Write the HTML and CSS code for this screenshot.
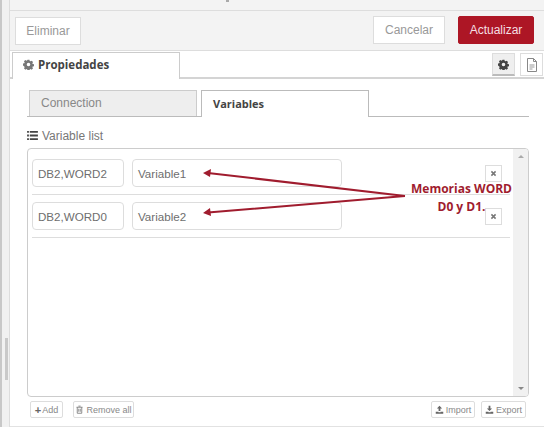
FILE: index.html
```html
<!DOCTYPE html>
<html lang="es">
<head>
<meta charset="utf-8">
<title>Propiedades</title>
<link rel="stylesheet" href="styles.css">
</head>
<body>
<svg width="0" height="0" class="defs">
  <symbol id="gear" viewBox="0 0 16 16"><path fill="currentColor" fill-rule="evenodd" d="M6.6 1h2.8l.4 1.9 1.2.5 1.6-1 2 2-1 1.6.5 1.2 1.9.4v2.8l-1.9.4-.5 1.2 1 1.6-2 2-1.6-1-1.2.5-.4 1.9H6.6l-.4-1.9-1.2-.5-1.6 1-2-2 1-1.6-.5-1.2L0 9.4V6.6l1.9-.4.5-1.2-1-1.6 2-2 1.6 1 1.2-.5zM8 5.4a2.6 2.6 0 1 0 0 5.2 2.6 2.6 0 0 0 0-5.2z"/></symbol>
  <symbol id="cross" viewBox="0 0 10 10"><path d="M2 2l6 6M8 2l-6 6" stroke="currentColor" stroke-width="2.2" fill="none"/></symbol>
  <symbol id="tray-up" viewBox="0 0 12 12"><path fill="currentColor" d="M6 1l3.500 3.500H7.200V8H4.800V4.500H2.500zM1 9h3.500v.8h3V9H11v2.500H1z"/></symbol>
  <symbol id="tray-down" viewBox="0 0 12 12"><path fill="currentColor" d="M4.800 1h2.400v3.500h2.300L6 8 2.500 4.500h2.300zM1 9h3.500v.8h3V9H11v2.500H1z"/></symbol>
</svg>
<div class="app">
  <div class="gutter"><span class="grip"></span></div>
  <main class="tray">
    <div class="topbar"><span class="speck"></span></div>
    <div class="toolbar">
      <button class="btn">Eliminar</button>
      <span class="spacer"></span>
      <button class="btn cancel">Cancelar</button>
      <button class="btn primary">Actualizar</button>
    </div>
    <div class="tabbar">
      <div class="tab-main"><svg class="ico-gear"><use href="#gear"/></svg>Propiedades</div>
      <span class="spacer"></span>
      <button class="side-btn active"><svg class="ico-gear dark"><use href="#gear"/></svg></button>
      <button class="side-btn">
        <svg class="ico-doc" viewBox="0 0 12 14"><path d="M1.500 .5h6l3 3v10h-9z M7.500 .5v3h3" fill="none" stroke="#888"/><path d="M3.500 7h5M3.500 9h5M3.500 11h3" stroke="#999"/></svg>
      </button>
    </div>
    <div class="content">
      <div class="subtabs">
        <div class="subtab">Connection</div>
        <div class="subtab current">Variables</div>
      </div>
      <div class="list-label">
        <svg class="ico-list" viewBox="0 0 12 10"><path fill="#444" d="M0 0h2v2H0zM3 0h9v2H3zM0 4h2v2H0zM3 4h9v2H3zM0 8h2v2H0zM3 8h9v2H3z"/></svg>Variable list
      </div>
      <div class="list">
        <div class="rows">
          <div class="row">
            <div class="input addr">DB2,WORD2</div>
            <div class="input name">Variable1</div>
            <button class="del"><svg class="ico-x"><use href="#cross"/></svg></button>
          </div>
          <div class="row">
            <div class="input addr">DB2,WORD0</div>
            <div class="input name">Variable2</div>
            <button class="del"><svg class="ico-x"><use href="#cross"/></svg></button>
          </div>
        </div>
        <div class="scrollbar"><span class="arrow up"></span><span class="arrow down"></span></div>
      </div>
      <div class="actions">
        <button class="mini add"><span class="plus">+</span>Add</button>
        <button class="mini remove">
          <svg class="ico-mini" viewBox="0 0 12 12"><path d="M4.500 1.500h3M2 3h8M3 3v8h6V3M5 5v4M7 5v4" fill="none" stroke="#777" stroke-width="1.100"/></svg>Remove all
        </button>
        <span class="spacer"></span>
        <button class="mini import"><svg class="ico-mini"><use href="#tray-up"/></svg>Import</button>
        <button class="mini export"><svg class="ico-mini"><use href="#tray-down"/></svg>Export</button>
      </div>
    </div>
  </main>
</div>
<svg class="arrows" width="544" height="427" viewBox="0 0 544 427">
  <path d="M405 196L208 173M405 196L208 212.500" fill="none" stroke="#a01c2e" stroke-width="2"/>
  <path d="M203 173l8-4-1 8zM203 213l7-5 1 8z" fill="#a01c2e"/>
</svg>
<div class="note">Memorias WORD<br>D0 y D1.</div>
</body>
</html>
```

FILE: styles.css
```css
* { box-sizing: border-box; }
html, body { margin: 0; padding: 0; }
body {
  width: 544px;
  height: 427px;
  overflow: hidden;
  position: relative;
  background: #fff;
  font-family: "Liberation Sans", Arial, sans-serif;
  color: #555;
}
.defs { position: absolute; }
.app { display: flex; height: 427px; }
.gutter {
  width: 10px;
  flex: none;
  background: #f1f1f1;
  border-left: 2px solid #c8c8c8;
  border-right: 1px solid #ddd;
  padding: 338px 0 0 3px;
}
.grip {
  display: block;
  width: 3px;
  height: 42px;
  background: #c9c9c9;
}
.tray { flex: 1; min-width: 0; display: flex; flex-direction: column; border-bottom: 1px solid #e2e2e2; }
.topbar { height: 11px; flex: none; background: #f3f3f3; border-bottom: 1px solid #ddd; }
.speck { display: block; width: 3px; height: 2px; margin-left: 216px; background: #aaa; }
.toolbar {
  height: 40px;
  flex: none;
  display: flex;
  align-items: flex-start;
  padding: 5px 10px 0 5px;
  background: #f3f3f3;
  border-bottom: 1px solid #ddd;
}
.spacer { flex: 1; }
.btn {
  width: 66px;
  height: 28px;
  margin-top: 1px;
  padding: 0;
  border: 1px solid #ddd;
  background: #fff;
  color: #999;
  font: 12px "Liberation Sans", Arial, sans-serif;
}
.btn.cancel { width: 72px; margin-top: 0; margin-right: 13px; }
.btn.primary { width: 76px; margin-top: 0; background: #ad1625; border-color: #ad1625; color: #f4dfe2; border-radius: 2px; }
.tabbar {
  height: 28px;
  flex: none;
  display: flex;
  align-items: flex-start;
  padding: 1px 1px 0 2px;
  border-bottom: 2px solid #d4d4d4;
  background: #fff;
}
.tab-main {
  width: 168px;
  height: 27px;
  display: flex;
  align-items: center;
  padding: 0 0 3px 10px;
  border: 1px solid #ccc;
  border-bottom: 0;
  background: #fff;
  color: #444;
  font: bold 11.5px "Open Sans", sans-serif;
}
.ico-gear { width: 11px; height: 11px; margin-right: 4px; color: #777; }
.ico-gear.dark { margin: 0; color: #444; }
.side-btn {
  width: 23px;
  height: 23px;
  margin: 1px 0 0 5px;
  padding: 0;
  border: 1px solid #ddd;
  background: #fff;
  display: flex;
  align-items: center;
  justify-content: center;
}
.side-btn.active { background: #efefef; border-bottom: 2px solid #bbb; }
.ico-doc { width: 12px; height: 14px; }
.content { flex: 1; min-height: 0; padding: 11px 15px 0 17px; display: flex; flex-direction: column; }
.subtabs { height: 27px; flex: none; display: flex; align-items: flex-start; border-bottom: 1px solid #bbb; padding-left: 2px; gap: 4px; }
.subtab {
  width: 168px;
  height: 26px;
  display: flex;
  align-items: center;
  padding: 0 0 1px 11px;
  background: #eee;
  border: 1px solid #ccc;
  border-bottom: 0;
  color: #888;
  font-size: 12px;
}
.subtab.current {
  height: 27px;
  padding-bottom: 2px;
  background: #fff;
  color: #444;
  font: bold 11px "Open Sans", sans-serif;
  border-color: #bbb;
}
.list-label { height: 31px; flex: none; display: flex; align-items: center; padding-top: 6px; color: #777; font-size: 12px; }
.ico-list { width: 11px; height: 9px; margin-right: 4px; }
.list {
  height: 249px;
  flex: none;
  display: flex;
  border: 1px solid #ccc;
  border-radius: 4px;
  overflow: hidden;
}
.rows { flex: 1; padding: 3px 3px 0 4px; min-width: 0; }
.row {
  height: 43px;
  display: flex;
  align-items: flex-start;
  padding-top: 7px;
  border-bottom: 1px solid #ddd;
}
.input {
  height: 28px;
  display: flex;
  align-items: center;
  padding-left: 5px;
  border: 1px solid #ddd;
  border-radius: 4px;
  color: #6e6e6e;
  font-size: 11.6px;
}
.addr { width: 92px; }
.name { width: 210px; margin-left: 8px; }
.del {
  width: 17px;
  height: 17px;
  margin: 6px 0 0 143px;
  padding: 0;
  background: #fff;
  border: 1px solid #ddd;
  display: flex;
  align-items: center;
  justify-content: center;
}
.ico-x { width: 7px; height: 7px; color: #777; }
.scrollbar { width: 15px; flex: none; background: #f1f1f1; display: flex; flex-direction: column; justify-content: space-between; align-items: center; padding: 6px 0; }
.arrow { width: 0; height: 0; border-left: 3px solid transparent; border-right: 3px solid transparent; }
.arrow.up { border-bottom: 3px solid #aaa; }
.arrow.down { border-top: 3px solid #888; }
.actions { height: 17px; flex: none; margin: 4px 3px 0 3px; display: flex; }
.mini {
  height: 17px;
  padding: 0;
  background: #fff;
  border: 1px solid #ddd;
  border-radius: 2px;
  color: #888;
  font: 9px "Liberation Sans", Arial, sans-serif;
  display: flex;
  align-items: center;
  justify-content: center;
}
.add { width: 33px; }
.plus { color: #666; font-weight: bold; font-size: 11px; margin-right: 1px; }
.remove { width: 61px; margin-left: 10px; }
.import { width: 44px; margin-right: 6px; }
.export { width: 45px; }
.ico-mini { width: 9px; height: 9px; margin-right: 2px; color: #666; }
.arrows { position: absolute; left: 0; top: 0; pointer-events: none; }
.note {
  position: absolute;
  left: 400px;
  top: 180px;
  width: 123px;
  text-align: center;
  color: #a01c2e;
  font: bold 12px/18px "Open Sans", sans-serif;
}
```
